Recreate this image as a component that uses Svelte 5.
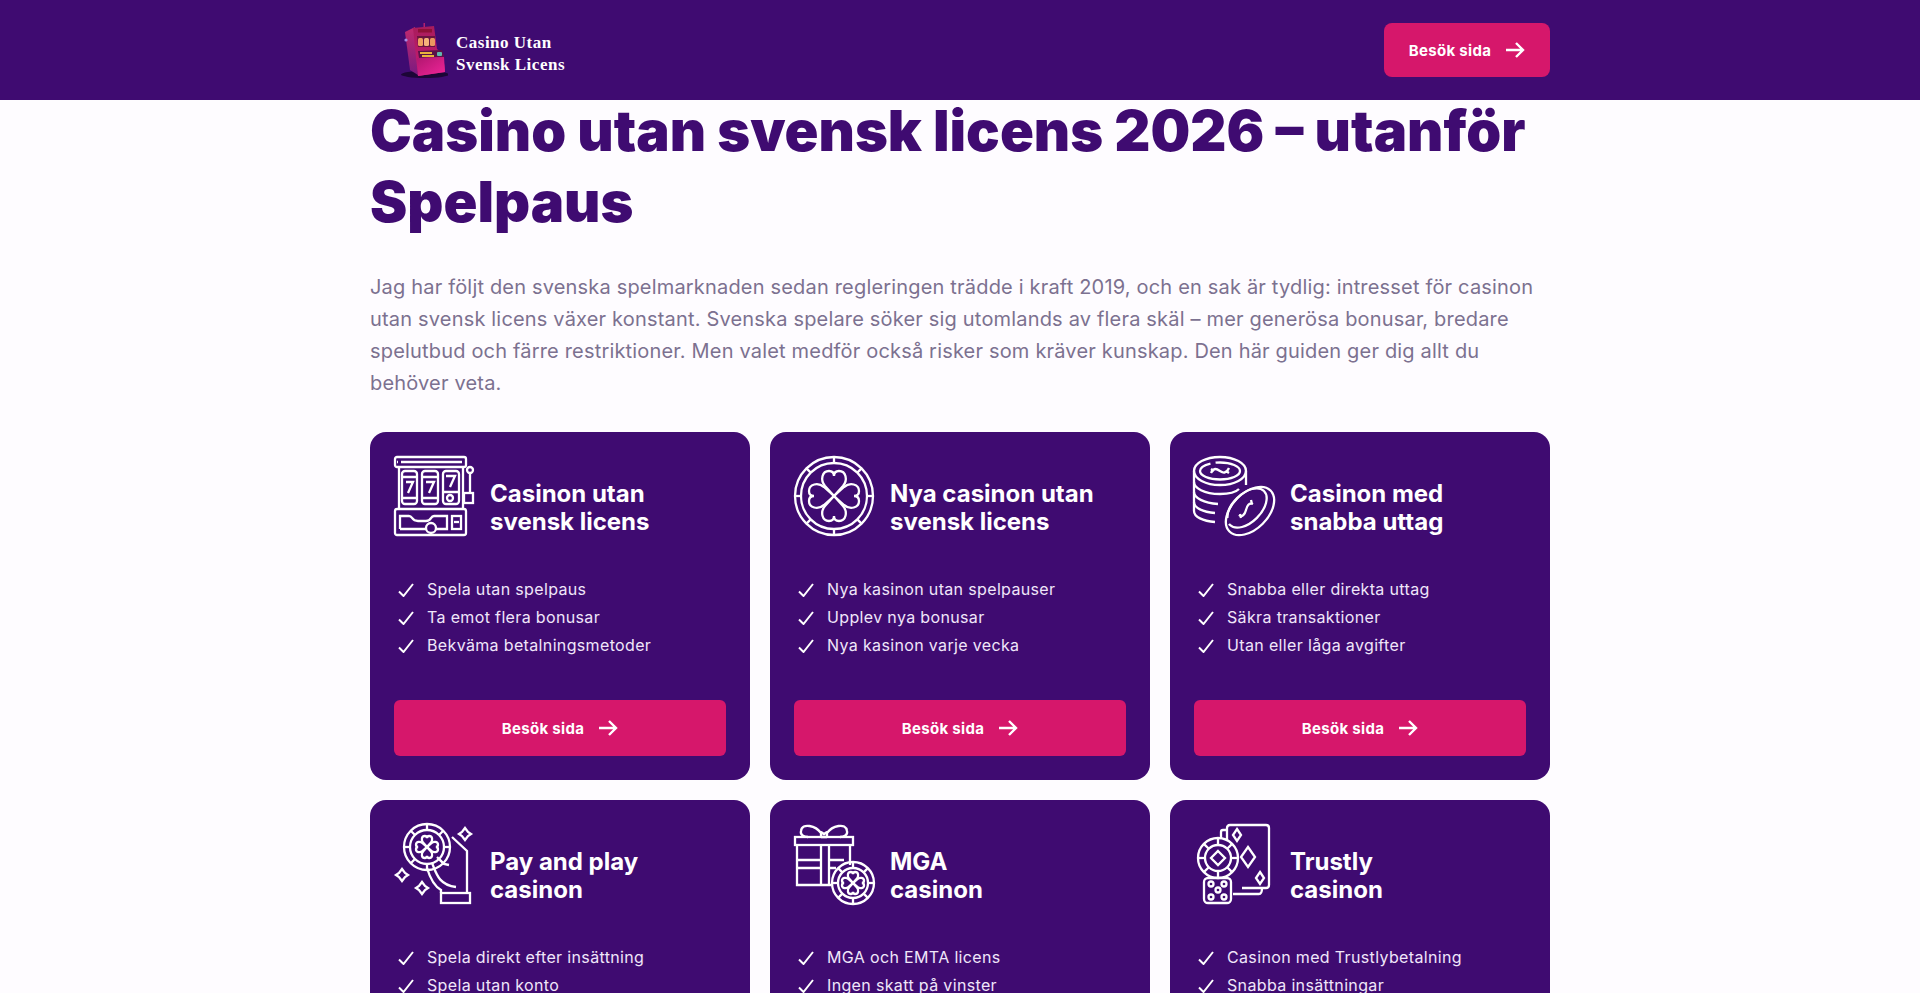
<script>
  const cards = [
    { icon: 'slot', l1: 'Casinon utan', l2: 'svensk licens', items: ['Spela utan spelpaus', 'Ta emot flera bonusar', 'Bekväma betalningsmetoder'] },
    { icon: 'clover', l1: 'Nya casinon utan', l2: 'svensk licens', items: ['Nya kasinon utan spelpauser', 'Upplev nya bonusar', 'Nya kasinon varje vecka'] },
    { icon: 'coins', l1: 'Casinon med', l2: 'snabba uttag', items: ['Snabba eller direkta uttag', 'Säkra transaktioner', 'Utan eller låga avgifter'] },
    { icon: 'hand', l1: 'Pay and play', l2: 'casinon', items: ['Spela direkt efter insättning', 'Spela utan konto'] },
    { icon: 'gift', l1: 'MGA', l2: 'casinon', items: ['MGA och EMTA licens', 'Ingen skatt på vinster'] },
    { icon: 'cards', l1: 'Trustly', l2: 'casinon', items: ['Casinon med Trustlybetalning', 'Snabba insättningar'] }
  ];
  const heart = 'M40 40 L31 30 C26 24 28 15 35 15 C38 15 40 17 40 20 C40 17 42 15 45 15 C52 15 54 24 49 30 Z';
  const ticks = [0, 45, 90, 135, 180, 225, 270, 315];
</script>

{#snippet clover(cx, cy, s)}
  <g transform="translate({cx} {cy}) scale({s}) translate(-40 -40)">
    {#each [0, 90, 180, 270] as a}
      <path d={heart} transform="rotate({a} 40 40)" vector-effect="non-scaling-stroke" />
    {/each}
  </g>
{/snippet}

{#snippet chipTicks(cx, cy, r1, r2)}
  {#each ticks as a}
    <line x1={cx} y1={cy - r1} x2={cx} y2={cy - r2} transform="rotate({a} {cx} {cy})" />
  {/each}
{/snippet}

{#snippet arrow()}
  <svg class="arrow" viewBox="0 0 20 18" aria-hidden="true"><path d="M1 9H18M11 2l7 7-7 7" /></svg>
{/snippet}

<div class="page">
  <header class="topbar">
    <div class="topbar-inner">
      <a class="brand" href="#top">
        <svg class="machine" viewBox="0 0 48 55" aria-hidden="true">
          <defs>
            <linearGradient id="mfront" x1="0" y1="0" x2="0" y2="1"><stop offset="0" stop-color="#a81c5c" /><stop offset="1" stop-color="#c81a74" /></linearGradient>
            <linearGradient id="mlow" x1="0" y1="0" x2="1" y2="1"><stop offset="0" stop-color="#b0166e" /><stop offset="1" stop-color="#f0259a" /></linearGradient>
            <linearGradient id="mside" x1="0" y1="0" x2="0" y2="1"><stop offset="0" stop-color="#c22a6e" /><stop offset="1" stop-color="#7a1a80" /></linearGradient>
          </defs>
          <ellipse cx="25" cy="51.5" rx="24" ry="3.5" fill="#1c0636" />
          <path d="M5 9 15 4 18 52 10 47Z" fill="url(#mside)" />
          <path d="M13 5 34 3 37 26 43 31 45 49 18 53Z" fill="url(#mfront)" />
          <rect x="23.5" y="0" width="1.5" height="4" fill="#b5206f" />
          <rect x="18" y="6" width="14" height="3.5" fill="#8e1038" />
          <path d="M17 13H35V24H18Z" fill="#6a1440" />
          <rect x="18" y="15" width="5" height="8" rx="1.5" fill="#f0a060" />
          <rect x="24" y="15" width="5" height="8" rx="1.5" fill="#f6b27a" />
          <rect x="30" y="15" width="5" height="8" rx="1.5" fill="#ec9860" />
          <path d="M18 28 42 27 44 34 19 35Z" fill="#5a1248" />
          <rect x="20" y="29" width="12" height="2" fill="#e8b13c" />
          <rect x="22" y="32" width="12" height="2" fill="#e8b13c" />
          <rect x="37" y="29" width="5" height="4" rx="1" fill="#5fb8b0" />
          <path d="M17 35 44 34 45 49 18 53Z" fill="url(#mlow)" />
          <circle cx="6" cy="17" r="1.6" fill="#a68be6" />
        </svg>
        <span class="brand-name">Casino Utan<br />Svensk Licens</span>
      </a>
      <a class="cta cta-top" href="#top">Besök sida {@render arrow()}</a>
    </div>
  </header>

  <main class="content">
    <h1>Casino utan svensk licens 2026 – utanför Spelpaus</h1>
    <p class="intro">Jag har följt den svenska spelmarknaden sedan regleringen trädde i kraft 2019, och en sak är tydlig: intresset för casinon utan svensk licens växer konstant. Svenska spelare söker sig utomlands av flera skäl – mer generösa bonusar, bredare spelutbud och färre restriktioner. Men valet medför också risker som kräver kunskap. Den här guiden ger dig allt du behöver veta.</p>

    <section class="grid">
      {#each cards as card}
        <article class="card">
          <div class="card-head">
            <svg class="icon" viewBox="0 0 80 80" aria-hidden="true">
              {#if card.icon === 'slot'}
                <rect x="1" y="1" width="71" height="10" rx="2" />
                <path d="M7 6H68M3 6H4" />
                <path d="M5 11V53M69 11V53" />
                <rect x="8" y="15" width="15" height="33" rx="3" />
                <rect x="28" y="15" width="16" height="33" rx="3" />
                <rect x="49" y="15" width="16" height="33" rx="3" />
                <path d="M8 21H23M8 42H23M28 21H44M28 42H44M49 36H65" />
                <path d="M12 26H19L14 37M32 26H40L35 37M52 20H61L56 31" />
                <circle cx="56" cy="42" r="3" />
                <circle cx="76" cy="14" r="3" />
                <path d="M76 17V37" />
                <rect x="70" y="37" width="9" height="10" />
                <rect x="1" y="53" width="71" height="26" rx="2" />
                <path d="M6 73V60H15C19 60 17 65 24 65H32C38 65 36 60 40 60H53V73H42M32 73H6" />
                <circle cx="37" cy="72" r="5" />
                <rect x="58" y="60" width="9" height="13" />
                <path d="M60 66H65" />
              {:else if card.icon === 'clover'}
                <circle cx="40" cy="40" r="39" />
                <circle cx="40" cy="40" r="33" />
                {@render chipTicks(40, 40, 39, 33)}
                {@render clover(40, 40, 1)}
              {:else if card.icon === 'coins'}
                <ellipse cx="26" cy="15" rx="26" ry="14" />
                <ellipse cx="26" cy="15" rx="20" ry="8.5" stroke-dasharray="60 5" />
                <path d="M17 17C20 11 23 13 26 15 29 17 32 18 35 12M17 13 20 15M32 15 35 17" />
                <path d="M0 15V55C0 61 9 65 21 66" />
                <path d="M0 26C0 32 10 38 26 38 34 38 41 37 45 33M0 36C0 42 10 47 24 48M0 46C0 52 9 56 21 57" />
                <path d="M52 15V29" />
                <ellipse cx="56" cy="55" rx="29" ry="18" transform="rotate(-45 56 55)" />
                <ellipse cx="53" cy="52" rx="24" ry="14" transform="rotate(-45 53 52)" stroke-dasharray="62 6" />
                <path d="M45 59C48 62 51 58 52 54 53 50 55 46 59 48M57 44 58 48M46 58 47 62" />
              {:else if card.icon === 'hand'}
                <circle cx="33" cy="23" r="23" />
                <circle cx="33" cy="23" r="17" />
                {@render chipTicks(33, 23, 23, 17)}
                {@render clover(33, 23, 0.44)}
                <path d="M58 13 73 27V69" />
                <path d="M47 69V66C40 62 36 54 33 44" />
                <path d="M43 33 50 40 55 41M38 39C42 48 44 61 62 63" />
                <rect x="47" y="69" width="29" height="10" />
                <path d="M71 4 74 8 77 10 74 12 71 16 68 12 65 10 68 8Z" />
                <path d="M8 45 11 49 14 51 11 53 8 57 5 53 2 51 5 49Z" />
                <path d="M28 58 31 62 34 64 31 66 28 70 25 66 22 64 25 62Z" />
              {:else if card.icon === 'gift'}
                <rect x="1" y="13" width="58" height="8" />
                <path d="M3 21V61H37M56 21V41" />
                <path d="M27 21V61M35 21V61" />
                <path d="M3 36H27M35 36H50M3 44H27M35 44H42" />
                <path d="M27 13V9C22 2 8 -2 7 7 6 11 10 13 14 13M33 13V9C38 2 52 -2 53 7 54 11 50 13 46 13M27 8 30 10 33 8M27 13H33" />
                <circle cx="59" cy="59" r="21" />
                <circle cx="59" cy="59" r="15" />
                {@render chipTicks(59, 59, 21, 15)}
                {@render clover(59, 59, 0.44)}
              {:else}
                <path d="M33 16V4C33 2 34 1 36 1H72C74 1 75 2 75 4V61C75 63 74 64 72 64H48" />
                <path d="M33 6H29C28 6 27 7 27 8V14" />
                <path d="M39 70H65C67 70 68 68 68 64" />
                <path d="M43 5 47 11 43 17 39 11Z" />
                <path d="M54 23 61 33 54 43 47 33Z" />
                <path d="M66 48 70 54 66 60 62 54Z" />
                <circle cx="24" cy="34" r="20" />
                <circle cx="24" cy="34" r="13" />
                {@render chipTicks(24, 34, 20, 13)}
                <path d="M24 27 31 34 24 41 17 34Z" />
                <rect x="10" y="54" width="27" height="25" rx="4" />
                <circle cx="17" cy="60" r="2.5" /><circle cx="30" cy="60" r="2.5" /><circle cx="24" cy="66" r="2.5" /><circle cx="17" cy="73" r="2.5" /><circle cx="30" cy="73" r="2.5" />
              {/if}
            </svg>
            <h2>{card.l1}<br />{card.l2}</h2>
          </div>
          <ul>
            {#each card.items as item}
              <li>
                <svg class="check" viewBox="0 0 16 14" aria-hidden="true"><path d="M1 8.5 5.5 13 15 1" /></svg>
                {item}
              </li>
            {/each}
          </ul>
          <a class="cta cta-card" href="#top">Besök sida {@render arrow()}</a>
        </article>
      {/each}
    </section>
  </main>
</div>

<style>
  :global(body) {
    margin: 0;
    background: #fefcff;
    font-family: Inter, "Liberation Sans", sans-serif;
  }
  .page {
    height: 100vh;
    overflow: hidden;
  }
  .topbar {
    height: 100px;
    background: #3f0b71;
    display: flex;
    justify-content: center;
    align-items: center;
  }
  .topbar-inner {
    width: 1180px;
    display: flex;
    justify-content: space-between;
    align-items: center;
  }
  .brand {
    margin-left: 30px;
    display: flex;
    align-items: center;
    gap: 8px;
    text-decoration: none;
  }
  .machine {
    width: 48px;
    height: 55px;
  }
  .brand-name {
    color: #fff;
    font: 700 17px/22px "Liberation Serif", serif;
    letter-spacing: 0.5px;
    padding-top: 8px;
  }
  .cta {
    display: flex;
    align-items: center;
    justify-content: center;
    gap: 14px;
    background: #d6176b;
    color: #fff;
    font-weight: 700;
    font-size: 15px;
    letter-spacing: 0.3px;
    text-decoration: none;
    border-radius: 6px;
  }
  .cta-top {
    width: 166px;
    height: 54px;
    border-radius: 8px;
  }
  .cta-card {
    height: 56px;
    margin-top: 41px;
  }
  .arrow {
    width: 20px;
    height: 18px;
    fill: none;
    stroke: #fff;
    stroke-width: 2.4;
  }
  .content {
    width: 1180px;
    margin: 0 auto;
  }
  h1 {
    margin: -4px 0 33px;
    color: #3f0b71;
    font-size: 56px;
    font-weight: 900;
    line-height: 71px;
  }
  .intro {
    margin: 0 0 33px;
    color: #7c7190;
    font-size: 20px;
    letter-spacing: 0.18px;
    line-height: 32px;
  }
  .grid {
    display: grid;
    grid-template-columns: repeat(3, 1fr);
    gap: 20px;
  }
  .card {
    background: #3f0b71;
    border-radius: 16px;
    padding: 24px;
    display: flex;
    flex-direction: column;
  }
  .card-head {
    display: flex;
    align-items: flex-end;
    gap: 16px;
  }
  .icon {
    width: 80px;
    height: 80px;
    flex: none;
    fill: none;
    stroke: #fff;
    stroke-width: 2.3;
    overflow: visible;
  }
  h2 {
    margin: 0;
    color: #fff;
    font-size: 24px;
    font-weight: 700;
    line-height: 28px;
  }
  ul {
    list-style: none;
    margin: 39px 0 0;
    padding: 0;
  }
  li {
    display: flex;
    align-items: center;
    gap: 13px;
    height: 28px;
    padding-left: 4px;
    color: #f0e6fa;
    font-size: 16px;
    letter-spacing: 0.35px;
  }
  .check {
    width: 16px;
    height: 14px;
    margin-top: 2px;
    fill: none;
    stroke: #fff;
    stroke-width: 2;
  }
</style>
